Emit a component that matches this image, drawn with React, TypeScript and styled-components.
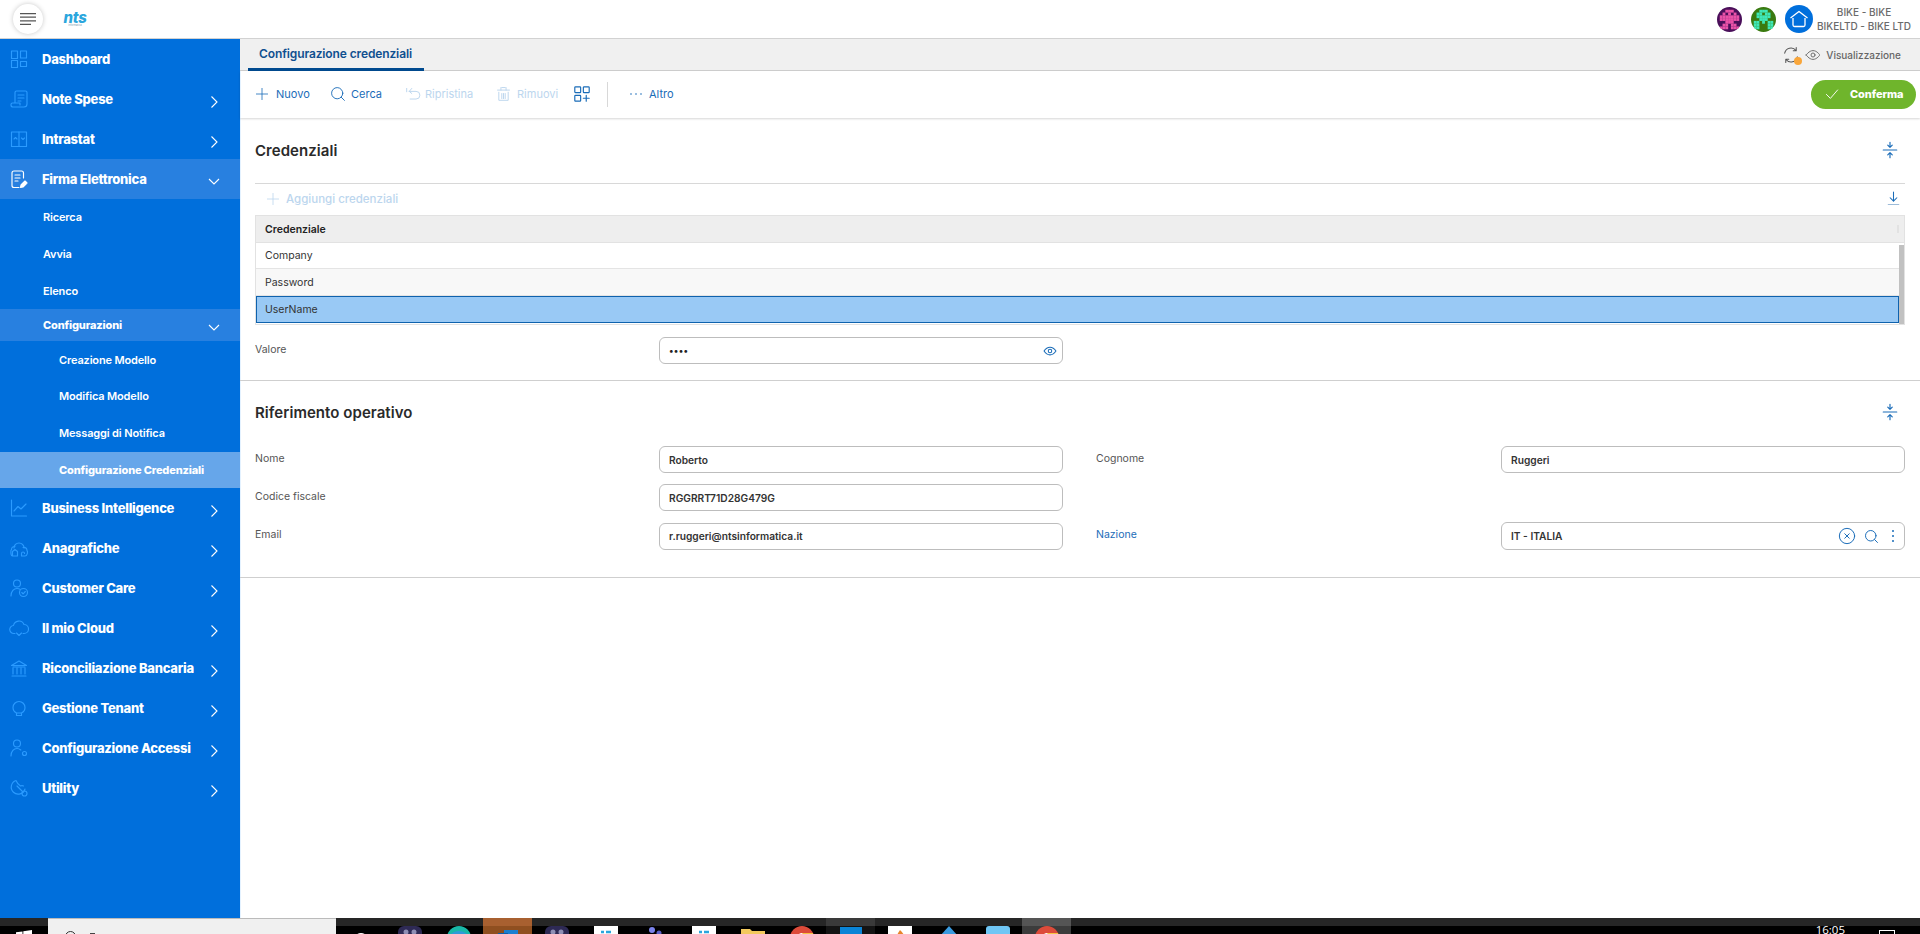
import React from "react";
import styled, { createGlobalStyle } from "styled-components";

const FONT = `Inter, "Noto Sans", "Liberation Sans", sans-serif`;
const BLUE = "#1a6cb8";
const DIM = "#bcd6ee";

const Global = createGlobalStyle`
  html, body { margin: 0; padding: 0; background: #fff; }
  body { font-family: ${FONT}; overflow: hidden; }
  * { box-sizing: border-box; }
`;

const Page = styled.div`display:flex;flex-direction:column;width:1920px;height:934px;overflow:hidden;`;
const TopBar = styled.header`display:flex;align-items:center;height:39px;flex:none;border-bottom:1px solid #d2d2d2;background:#fff;padding:0 0 0 13px;`;
const MenuButton = styled.button`width:30px;height:30px;border-radius:50%;border:none;background:#fff;box-shadow:0 0 5px rgba(0,0,0,.22);display:flex;align-items:center;justify-content:center;padding:0;`;
const Logo = styled.div`margin-left:20px;display:flex;flex-direction:column;align-items:center;width:24px;color:#2ba6dd;font:italic 800 15px/13px ${FONT};letter-spacing:-.3px;`;
const LogoSub = styled.span`font:normal 400 2.5px/3px ${FONT};color:#7a9cb0;letter-spacing:0;`;
const TopRight = styled.div`margin-left:auto;display:flex;align-items:center;`;
const Avatar = styled.svg`width:25px;height:25px;border-radius:50%;margin-right:9px;display:block;`;
const HomeBadge = styled.div`width:28px;height:28px;border-radius:50%;background:#006fdc;display:flex;align-items:center;justify-content:center;`;
const Company = styled.div`width:102px;margin:0 5px 0 0;text-align:center;color:#6a6a6a;font-size:10px;line-height:14px;font-weight:500;white-space:nowrap;`;

const Body = styled.div`display:flex;flex:1;min-height:0;`;
const Side = styled.nav`width:240px;flex:none;background:#006fdc;color:#fff;`;
const MainRow = styled.div<{ $open?: boolean }>`display:flex;align-items:center;height:40px;padding:0 19px 0 0;background:${p => p.$open ? "#2880e0" : "transparent"};`;
const IconSlot = styled.span<{ $white?: boolean }>`width:42px;padding-right:4px;flex:none;display:flex;justify-content:center;color:${p => p.$white ? "#fff" : "#2b9bff"};`;
const MainLabel = styled.span`font-size:13px;font-weight:800;letter-spacing:-.25px;white-space:nowrap;`;
const Chev = styled.span<{ $open?: boolean }>`margin-left:auto;display:flex;color:#fff;position:relative;top:${p => p.$open ? 2 : 3}px;`;
const SubRow = styled.div<{ $h: number; $level: number; $bg?: string; $bold?: boolean }>`display:flex;align-items:center;height:${p => p.$h}px;padding:0 19px 0 ${p => p.$level === 2 ? 59 : 43}px;background:${p => p.$bg || "transparent"};font-size:11px;font-weight:${p => p.$bold ? 800 : 600};letter-spacing:-.15px;white-space:nowrap;`;

const Main = styled.main`flex:1;min-width:0;box-shadow:inset 1px 0 0 #e4f2ff;display:flex;flex-direction:column;`;
const TabBar = styled.div`height:32px;flex:none;background:#f0f0f0;border-bottom:1px solid #cfcfcf;display:flex;align-items:stretch;padding:0 4px 0 8px;`;
const Tab = styled.div`width:176px;height:32px;border-bottom:3px solid #004a8f;padding:0 0 0 11px;display:flex;align-items:center;color:#0f4f8f;font-size:12px;font-weight:600;letter-spacing:-.12px;white-space:nowrap;`;
const TabRight = styled.div`margin-left:auto;display:flex;align-items:center;color:#666;font-size:10px;font-weight:500;gap:5px;padding-right:15px;`;
const SyncWrap = styled.span`position:relative;display:flex;color:#555;`;
const SyncDot = styled.i`position:absolute;right:-2px;bottom:-1px;width:8px;height:8px;border-radius:50%;background:#f9a63a;`;

const Toolbar = styled.div`height:47px;flex:none;display:flex;align-items:center;padding:0 4px 0 15px;box-shadow:0 1px 2px rgba(0,0,0,.16);position:relative;`;
const ToolBtn = styled.div<{ $off?: boolean; $w: number; $gap?: number }>`display:flex;align-items:center;gap:${p => p.$gap ?? 6}px;width:${p => p.$w}px;flex:none;color:${p => p.$off ? DIM : BLUE};font-size:11px;font-weight:400;white-space:nowrap;position:relative;top:-1px;`;
const Divider = styled.span`width:1px;height:25px;background:#d8d8d8;margin:0 22px 0 16px;`;
const Confirm = styled.button`margin-left:auto;width:105px;height:29px;border:none;border-radius:15px;background:#6fb52c;color:#fff;font:800 11px ${FONT};letter-spacing:-.1px;display:flex;align-items:center;padding:0 0 2px 13px;gap:10px;`;

const Section = styled.section`padding:0 15px;border-bottom:1px solid #cfcfcf;`;
const TitleRow = styled.div<{ $h: number; $pb?: number }>`height:${p => p.$h}px;padding-bottom:${p => p.$pb || 0}px;display:flex;align-items:center;justify-content:space-between;color:${BLUE};`;
const Title = styled.h2`margin:0;color:#2a2a2a;font-size:15px;font-weight:600;letter-spacing:.05px;`;
const CollapseIco = styled.span`display:flex;margin-right:6px;`;
const AddRow = styled.div`height:32px;border-top:1px solid #d8d8d8;display:flex;align-items:center;padding:0 4px 2px 11px;gap:6px;color:${DIM};font-size:11.5px;font-weight:500;`;
const DownloadBtn = styled.span`margin-left:auto;display:flex;color:${BLUE};`;
const Table = styled.div`border:1px solid #e2e2e2;height:110px;position:relative;font-size:10.5px;font-weight:400;color:#333;`;
const HeadCell = styled.div`height:27px;background:#eeeeee;border-bottom:1px solid #e2e2e2;display:flex;align-items:center;padding-left:9px;font-weight:600;color:#222;`;
const BodyCell = styled.div<{ $bg: string; $h: number }>`height:${p => p.$h}px;margin-right:5px;background:${p => p.$bg};border-bottom:1px solid #e4e4e4;display:flex;align-items:center;padding-left:9px;`;
const SelectedCell = styled.div`height:27px;margin-right:5px;background:#99c9f5;border:1px solid #0f62ad;display:flex;align-items:center;padding-left:8px;`;
const ScrollThumb = styled.div`position:absolute;right:0;top:29px;bottom:0;width:5px;background:#c1c1c1;`;
const HeadMark = styled.i`position:absolute;right:5px;top:9px;width:2px;height:8px;background:#e2e2e2;`;

const FormGrid = styled.div<{ $pt?: number; $pb: number }>`display:grid;grid-template-columns:808px 809px;column-gap:33px;row-gap:11px;padding:${p => p.$pt || 0}px 0 ${p => p.$pb}px;`;
const Field = styled.div`display:grid;grid-template-columns:1fr 404px;align-items:center;`;
const Label = styled.label<{ $link?: boolean }>`font-size:10.5px;font-weight:400;color:${p => p.$link ? BLUE : "#555"};padding-bottom:3px;`;
const InputBox = styled.div<{ $h?: number }>`height:${p => p.$h || 27}px;border:1px solid #bdbdbd;border-radius:6px;display:flex;align-items:center;padding:0 5px 0 9px;font-size:10.2px;font-weight:600;color:#333;`;
const InputIcons = styled.span`margin-left:auto;display:flex;align-items:center;gap:8px;color:${BLUE};`;
const Blank = styled.div`height:27px;`;
const Dots = styled.span`font-size:9px;letter-spacing:.3px;color:#222;`;

const Taskbar = styled.footer`height:16px;flex:none;display:flex;overflow:hidden;background:linear-gradient(#262626 0 8px,#000 8px);position:relative;`;
const StartSlot = styled.div`width:48px;flex:none;display:flex;justify-content:center;padding-top:12px;`;
const WinLogo = styled.svg`width:16px;height:16px;`;
const SearchBox = styled.div`width:288px;flex:none;background:#f0f0f0;border-top:1px solid #bbb;display:flex;gap:14px;padding:12px 0 0 17px;`;
const SearchRing = styled.i`width:11px;height:11px;border:1.5px solid #333;border-radius:50%;display:block;flex:none;`;
const SearchMark = styled.i`width:5px;height:2px;margin-top:2px;background:#444;display:block;`;
const Slot = styled.div<{ $hi?: string; $lo?: string }>`width:49px;flex:none;display:flex;justify-content:center;background:${p => p.$hi ? `linear-gradient(${p.$hi} 0 8px,${p.$lo || p.$hi} 8px)` : "transparent"};`;
const SlotIcon = styled.svg`width:24px;height:24px;margin-top:8px;flex:none;`;
const TrayRight = styled.div`margin-left:auto;display:flex;padding-right:5px;`;
const Clock = styled.div`color:#fff;font:400 11.5px/12px "Open Sans",sans-serif;padding-top:6px;margin-right:34px;`;
const Notify = styled.i`display:block;width:16px;height:10px;border:1px solid #fff;margin-top:12px;margin-right:20px;`;

type P = { s?: number; w?: number; children: React.ReactNode };
const Ico = ({ s = 20, w = 1.15, children }: P) => (
  <svg width={s} height={s} viewBox="0 0 20 20" fill="none" stroke="currentColor" strokeWidth={w} strokeLinecap="round" strokeLinejoin="round">{children}</svg>
);
const Chevron = ({ open }: { open?: boolean }) => (
  <Chev $open={open}><svg width="14" height="14" viewBox="0 0 14 14" fill="none" stroke="currentColor" strokeWidth="1.1">{open ? <path d="M2 5l5 5 5-5" /> : <path d="M4.500 1.500l5.500 5.500-5.500 5.500" />}</svg></Chev>
);

const I = {
  dash: <Ico><rect x="2.500" y="2" width="6" height="7.500" /><rect x="11.500" y="2" width="6" height="7" /><rect x="2.500" y="11.500" width="6" height="7" /><rect x="11.500" y="12.500" width="6" height="5" /></Ico>,
  note: <Ico><path d="M6 14V3.500A1.500 1.500 0 0 1 7.500 2h9A1.500 1.500 0 0 1 18 3.500V15a3 3 0 0 1-3 3H4a2 2 0 0 1-2-2v-.500A1.500 1.500 0 0 1 3.500 14H11v2" /><path d="M9 6h6M9 9h6M9 12h3" /></Ico>,
  intra: <Ico><rect x="2.500" y="3" width="15" height="14.500" /><path d="M10 3v14.500M5 10l1.500-1.500L8 10M12.500 9l1.500 1.500L15.500 9" /></Ico>,
  firma: <Ico><path d="M14.500 9V4a2 2 0 0 0-2-2H5a2 2 0 0 0-2 2v12.500a2 2 0 0 0 2 2h5" /><path d="M6 6h5M6 9h5M6 12h3" /><path fill="currentColor" d="M11.500 18.500l.5-2.500 4-4 2 2-4 4z" /></Ico>,
  bi: <Ico><path d="M2.500 2v16h15M5 13l4-4.500 3 2.500 5-5" /></Ico>,
  ana: <Ico><path d="M5 10a5 5 0 0 1 10 0" /><path d="M6 8.500a3 3 0 0 0-3.500 3c-1 .5-1 6.500 1 6.500h5v-4.500L6 11.500 3.500 13.500V18" /><path d="M14 9.500c2.500-.5 4 1 4 3 1 1 .5 5.500-2 5.500h-3.500v-2.500a1.500 1.500 0 0 1 3 0" /></Ico>,
  care: <Ico><circle cx="8" cy="5.500" r="3.500" /><path d="M2 18c0-5 3-7.500 6-7.500 1.300 0 2 .2 3 .8" /><circle cx="14.500" cy="14.500" r="4" /><path d="M12.800 14.500l1.300 1.300 2.200-2.300" /></Ico>,
  cloud: <Ico><path d="M6 15.500H5a4 4 0 0 1-.5-8A5.500 5.500 0 0 1 15 6.500a4.500 4.500 0 0 1 0 9h-1" /><path d="M7.500 15l2.500 2.500 2.500-2.500" /></Ico>,
  bank: <Ico><path d="M2.500 7.500L10 3l7.500 4.500zM4 10v6M8 10v6M12 10v6M16 10v6M3 18h14M4 9h12" /></Ico>,
  tenant: <Ico><path d="M7.500 17.500h5v-2.500c2-1 3.500-3 3.500-5.500a6 6 0 0 0-12 0c0 2.500 1.500 4.500 3.500 5.500zM8 15h4" /></Ico>,
  conf: <Ico><circle cx="8" cy="5.500" r="3.500" /><path d="M2 18c0-5 3-7.500 6-7.500 1.500 0 2.700.5 3.800 1.500" /><circle cx="15.500" cy="15.500" r="2" /></Ico>,
  util: <Ico><path d="M7 2.500a7 7 0 1 0 9 8.500M7 2.500c1 2.500 2 4 4.500 5.500M11.500 8c1-.5 2-.5 3 0" /><circle cx="15.500" cy="15.500" r="2.500" /><path d="M13.500 13.500L8 8" /></Ico>,
  plus: <Ico s={14}><path d="M10 2v16M2 10h16" /></Ico>,
  search: <Ico s={16}><circle cx="9" cy="9" r="7" /><path d="M14 14l4 4" /></Ico>,
  undo: <Ico s={17}><path d="M2 4v4M5 7.500L8 4M5 7.500l3 2.500M5 7.500h8a4.500 4.500 0 0 1 0 9H6" /></Ico>,
  trash: <Ico s={17}><path d="M3 6h14M8 3h4M7 3v3M13 3v3M4.500 8.500V18h11V8.500M8 10v6M10 10v6M12 10v6" /></Ico>,
  gridAdd: <Ico s={18} w={1.300}><rect x="2" y="2" width="6.500" height="6.500" rx=".8" /><rect x="11.500" y="2" width="6.500" height="6.500" rx=".8" /><rect x="2" y="11.500" width="6.500" height="6.500" rx=".8" /><path d="M14.700 11.500v6.500M11.500 14.700h6.500" /></Ico>,
  dots: <svg width="12" height="12" viewBox="0 0 12 12" fill="currentColor"><circle cx="1" cy="6" r=".8" /><circle cx="6" cy="6" r=".8" /><circle cx="11" cy="6" r=".8" /></svg>,
  check: <Ico s={16}><path d="M3 10.500l5 5L17 5" /></Ico>,
  collapse: <Ico s={18} w={1.300}><path d="M2.500 10h15M10 1.500V7M7.500 4.500L10 7l2.500-2.500M10 18.500V13M7.500 15.500L10 13l2.500 2.500" /></Ico>,
  download: <Ico s={15} w={1.400}><path d="M10 1.500v12M5.500 9l4.500 4.500L14.500 9" /><path d="M3 18h14" stroke="#9dbcd9" strokeWidth="1.500" /></Ico>,
  eye: <Ico s={14} w={1.500}><path d="M1.500 10S5 4.500 10 4.500 18.500 10 18.500 10 15 15.500 10 15.500 1.500 10 1.500 10z" /><circle cx="10" cy="10" r="2.500" /></Ico>,
  eyeGray: <Ico s={16}><path d="M1.500 10S5 4.500 10 4.500 18.500 10 18.500 10 15 15.500 10 15.500 1.500 10 1.500 10z" /><circle cx="10" cy="10" r="2.500" /></Ico>,
  sync: <Ico s={18}><path d="M3 8a7 7 0 0 1 12.500-3M17 12a7 7 0 0 1-12.500 3M15.800 1.800v3.400h-3.300M4.200 18.200v-3.400h3.300" /></Ico>,
  xCircle: <Ico s={18} w={1.100}><circle cx="10" cy="10" r="8.500" /><path d="M7.500 7.500l5 5M12.500 7.500l-5 5" /></Ico>,
  search2: <Ico s={15} w={1.300}><circle cx="9" cy="9" r="7" /><path d="M14 14l4 4" /></Ico>,
  vdots: <svg width="12" height="14" viewBox="0 0 12 14" fill="currentColor"><circle cx="6" cy="2" r="1" /><circle cx="6" cy="7" r="1" /><circle cx="6" cy="12" r="1" /></svg>,
};

type Sub = { t: string; h: number; level: number; bg?: string; bold?: boolean; chev?: boolean };
const firmaSubs: Sub[] = [
  { t: "Ricerca", h: 36, level: 1 },
  { t: "Avvia", h: 37, level: 1 },
  { t: "Elenco", h: 37, level: 1 },
  { t: "Configurazioni", h: 32, level: 1, bg: "#2880e0", bold: true, chev: true },
  { t: "Creazione Modello", h: 37, level: 2 },
  { t: "Modifica Modello", h: 36, level: 2 },
  { t: "Messaggi di Notifica", h: 38, level: 2 },
  { t: "Configurazione Credenziali", h: 36, level: 2, bg: "#66a6ea", bold: true },
];
const before = [
  { t: "Dashboard", i: I.dash, noChev: true },
  { t: "Note Spese", i: I.note },
  { t: "Intrastat", i: I.intra },
];
const after = [
  { t: "Business Intelligence", i: I.bi },
  { t: "Anagrafiche", i: I.ana },
  { t: "Customer Care", i: I.care },
  { t: "Il mio Cloud", i: I.cloud },
  { t: "Riconciliazione Bancaria", i: I.bank },
  { t: "Gestione Tenant", i: I.tenant },
  { t: "Configurazione Accessi", i: I.conf },
  { t: "Utility", i: I.util },
];

const Identicon = ({ bg, fg, cells }: { bg: string; fg: string; cells: string[] }) => (
  <Avatar viewBox="0 0 9 9">
    <rect width="9" height="9" fill={bg} />
    {cells.flatMap((row, y) => [...row].map((c, x) => c === "#" ? <rect key={`${x}-${y}`} x={x} y={y} width="1.02" height="1.02" fill={fg} /> : null))}
  </Avatar>
);

const chrome = <SlotIcon viewBox="0 0 24 24"><circle cx="12" cy="12" r="12" fill="#dd4b3a" /><circle cx="12" cy="12" r="5" fill="#fff" /><circle cx="12" cy="12" r="3.600" fill="#8ab4f8" /><path d="M12 7h11l1 5h-8z" fill="#f6c343" /></SlotIcon>;
const ntsTile = <SlotIcon viewBox="0 0 24 24"><rect x="0" width="24" height="24" fill="#fff" /><path d="M7 6h3M12 6h5" stroke="#2ba6dd" strokeWidth="2.500" /></SlotIcon>;
const meet = <SlotIcon viewBox="0 0 24 24"><rect width="24" height="24" rx="6" fill="#2e2a55" /><circle cx="8" cy="6" r="2.500" fill="#8f8fb5" /><circle cx="16" cy="6" r="2.500" fill="#8f8fb5" /></SlotIcon>;

const slots: { hi?: string; lo?: string; icon?: React.ReactNode }[] = [
  { icon: <SlotIcon viewBox="0 0 24 24"><circle cx="12" cy="14" r="6" fill="none" stroke="#fff" strokeWidth="2" /></SlotIcon> },
  { icon: meet },
  { icon: <SlotIcon viewBox="0 0 24 24"><circle cx="12" cy="12" r="12" fill="#19b8a8" /><path d="M2 14a10 8 0 0 1 20-2z" fill="#2f9bd8" /></SlotIcon> },
  { hi: "#a86030", lo: "#8f4f20", icon: <SlotIcon viewBox="0 0 24 24"><path d="M8 4h14v20H8z" fill="#1b7fd1" /><rect x="2" y="7" width="10" height="17" fill="#0f5fa8" /></SlotIcon> },
  { icon: meet },
  { icon: ntsTile },
  { icon: <SlotIcon viewBox="0 0 24 24"><circle cx="9" cy="4" r="3" fill="#7b83eb" /><circle cx="16" cy="7" r="2.500" fill="#5b5fc7" /></SlotIcon> },
  { icon: ntsTile },
  { icon: <SlotIcon viewBox="0 0 24 24"><path d="M0 3h9l2 2h13v19H0z" fill="#f3c95d" /></SlotIcon> },
  { icon: chrome },
  { hi: "#3a3a3a", lo: "#141414", icon: <SlotIcon viewBox="0 0 24 24"><path d="M1 1h22v23h-6V8H7v16H1z" fill="#0a84d6" /></SlotIcon> },
  { icon: <SlotIcon viewBox="0 0 24 24"><rect width="24" height="24" fill="#fff" /><path d="M12 4c3 3 5 5 4 10H8c0-4 2-7 4-10z" fill="#e8842a" /></SlotIcon> },
  { icon: <SlotIcon viewBox="0 0 24 24"><path d="M12 0l9 10H3z" fill="#3a9be0" /></SlotIcon> },
  { icon: <SlotIcon viewBox="0 0 24 24"><rect x="0" width="24" height="24" rx="3" fill="#6fc6f5" /></SlotIcon> },
  { hi: "#555", lo: "#3c3c3c", icon: chrome },
];

const Credentials = () => (
  <Section>
    <TitleRow $h={65} $pb={1}><Title>Credenziali</Title><CollapseIco>{I.collapse}</CollapseIco></TitleRow>
    <AddRow>{I.plus}<span>Aggiungi credenziali</span><DownloadBtn>{I.download}</DownloadBtn></AddRow>
    <Table>
      <HeadCell>Credenziale</HeadCell>
      <BodyCell $bg="#fff" $h={26}>Company</BodyCell>
      <BodyCell $bg="#f8f8f8" $h={27}>Password</BodyCell>
      <SelectedCell>UserName</SelectedCell>
      <ScrollThumb />
      <HeadMark />
    </Table>
    <FormGrid $pt={12} $pb={16}>
      <Field>
        <Label>Valore</Label>
        <InputBox><Dots>••••</Dots><InputIcons>{I.eye}</InputIcons></InputBox>
      </Field>
    </FormGrid>
  </Section>
);

const Reference = () => (
  <Section>
    <TitleRow $h={65} $pb={3}><Title>Riferimento operativo</Title><CollapseIco>{I.collapse}</CollapseIco></TitleRow>
    <FormGrid $pb={27}>
      <Field><Label>Nome</Label><InputBox>Roberto</InputBox></Field>
      <Field><Label>Cognome</Label><InputBox>Ruggeri</InputBox></Field>
      <Field><Label>Codice fiscale</Label><InputBox>RGGRRT71D28G479G</InputBox></Field>
      <Blank />
      <Field><Label>Email</Label><InputBox>r.ruggeri@ntsinformatica.it</InputBox></Field>
      <Field>
        <Label $link>Nazione</Label>
        <InputBox $h={28}>IT - ITALIA<InputIcons>{I.xCircle}{I.search2}{I.vdots}</InputIcons></InputBox>
      </Field>
    </FormGrid>
  </Section>
);

export default function App() {
  return (
    <Page>
      <Global />
      <TopBar>
        <MenuButton aria-label="menu">
          <svg width="16" height="12" viewBox="0 0 16 12" stroke="#555" strokeWidth="1.200"><path d="M0 .6h16M0 4.200h16M0 7.800h16M0 11.400h11" /></svg>
        </MenuButton>
        <Logo>nts<LogoSub>informatica</LogoSub></Logo>
        <TopRight>
          <Identicon bg="#4a0f5a" fg="#ea52a8" cells={[".........", "...###...", "..#.#.#..", ".#######.", ".#######.", "...###...", "..##.##..", ".###.###.", "........."]} />
          <Identicon bg="#3a7a10" fg="#3fe8b8" cells={[".........", "...###...", "..##.##..", "..#####..", "...###...", ".##.#.##.", ".##...##.", ".##...##.", "........."]} />
          <HomeBadge>
            <svg width="20" height="20" viewBox="0 0 20 20" fill="none" stroke="#fff" strokeWidth="1.300" strokeLinejoin="round"><path d="M1.500 9L10 2.500 18.500 9" /><path d="M4 9v7a1.500 1.500 0 0 0 1.500 1.500h9A1.500 1.500 0 0 0 16 16V9" /></svg>
          </HomeBadge>
          <Company>BIKE - BIKE<br />BIKELTD - BIKE LTD</Company>
        </TopRight>
      </TopBar>
      <Body>
        <Side>
          {before.map(r => (
            <MainRow key={r.t}><IconSlot>{r.i}</IconSlot><MainLabel>{r.t}</MainLabel>{!r.noChev && <Chevron />}</MainRow>
          ))}
          <MainRow $open><IconSlot $white>{I.firma}</IconSlot><MainLabel>Firma Elettronica</MainLabel><Chevron open /></MainRow>
          {firmaSubs.map(s => (
            <SubRow key={s.t} $h={s.h} $level={s.level} $bg={s.bg} $bold={s.bold}>{s.t}{s.chev && <Chevron open />}</SubRow>
          ))}
          {after.map(r => (
            <MainRow key={r.t}><IconSlot>{r.i}</IconSlot><MainLabel>{r.t}</MainLabel><Chevron /></MainRow>
          ))}
        </Side>
        <Main>
          <TabBar>
            <Tab>Configurazione credenziali</Tab>
            <TabRight>
              <SyncWrap>{I.sync}<SyncDot /></SyncWrap>
              {I.eyeGray}
              <span>Visualizzazione</span>
            </TabRight>
          </TabBar>
          <Toolbar>
            <ToolBtn $w={75} $gap={7}>{I.plus}<span>Nuovo</span></ToolBtn>
            <ToolBtn $w={75} $gap={5}>{I.search}<span>Cerca</span></ToolBtn>
            <ToolBtn $off $w={90} $gap={3}>{I.undo}<span>Ripristina</span></ToolBtn>
            <ToolBtn $off $w={78} $gap={5}>{I.trash}<span>Rimuovi</span></ToolBtn>
            <ToolBtn $w={18}>{I.gridAdd}</ToolBtn>
            <Divider />
            <ToolBtn $w={60} $gap={7}>{I.dots}<span>Altro</span></ToolBtn>
            <Confirm>{I.check}<span>Conferma</span></Confirm>
          </Toolbar>
          <Credentials />
          <Reference />
        </Main>
      </Body>
      <Taskbar>
        <StartSlot>
          <WinLogo viewBox="0 0 16 16" fill="#fff"><path d="M0 2.300L6.500 1.400V7.500H0zM7.300 1.300L16 0V7.500H7.300zM0 8.300H6.500V14.500L0 13.700zM7.300 8.300H16V16L7.300 14.700z" /></WinLogo>
        </StartSlot>
        <SearchBox><SearchRing /><SearchMark /></SearchBox>
        {slots.map((s, i) => <Slot key={i} $hi={s.hi} $lo={s.lo}>{s.icon}</Slot>)}
        <TrayRight>
          <Clock>16:05</Clock>
          <Notify />
        </TrayRight>
      </Taskbar>
    </Page>
  );
}
